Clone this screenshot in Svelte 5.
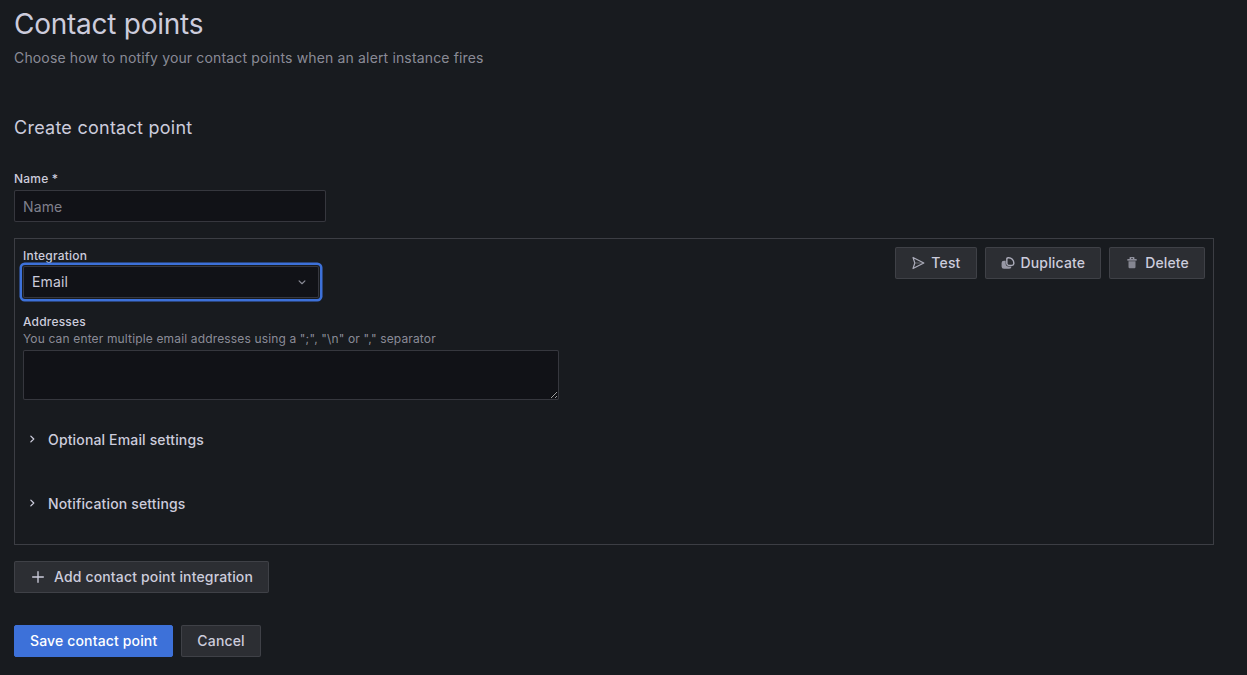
<script>
  const actions = [
    { label: 'Test', icon: 'send' },
    { label: 'Duplicate', icon: 'copy' },
    { label: 'Delete', icon: 'trash' }
  ];
  const sections = ['Optional Email settings', 'Notification settings'];
</script>

<div class="page">
  <header class="page-header">
    <h1>Contact points</h1>
    <p>Choose how to notify your contact points when an alert instance fires</p>
  </header>

  <h2>Create contact point</h2>

  <div class="field name-field">
    <label for="name">Name *</label>
    <input id="name" type="text" placeholder="Name" />
  </div>

  <section class="integration">
    <div class="actions">
      {#each actions as action}
        <button class="btn">
          <svg class="icon" viewBox="0 0 24 24" width="14" height="14">
            {#if action.icon === 'send'}
              <path d="M3.500 2.500 22 12 3.500 21.500 6.500 12Z" fill="none" stroke="currentColor" stroke-width="2" stroke-linejoin="round" />
              <path d="M7 12H20" fill="none" stroke="currentColor" stroke-width="1.200" opacity="0.6" />
            {:else if action.icon === 'copy'}
              <path d="M1 12a4 4 0 0 1 4-4h3v5a5 5 0 0 0 5 5h5a4 4 0 0 1-4 4H5a4 4 0 0 1-4-4Z" fill="currentColor" opacity="0.85" />
              <path d="M10 5a2 2 0 0 1 2-2h1a9 9 0 0 1 9 9v1a3 3 0 0 1-3 3h-6a3 3 0 0 1-3-3Z" fill="none" stroke="currentColor" stroke-width="2.400" stroke-linejoin="round" />
            {:else}
              <path d="M9 5V3h6v2M4 6.500h16" fill="none" stroke="currentColor" stroke-width="2" />
              <path d="M6 9h12v10a2 2 0 0 1-2 2H8a2 2 0 0 1-2-2Z" fill="currentColor" opacity="0.7" />
            {/if}
          </svg>
          {action.label}
        </button>
      {/each}
    </div>

    <div class="field integration-field">
      <span class="label">Integration</span>
      <div class="select">
        <span>Email</span>
        <svg viewBox="0 0 24 24" width="14" height="14">
          <path d="M7 10l5 5 5-5" fill="none" stroke="currentColor" stroke-width="2" stroke-linecap="round" stroke-linejoin="round" />
        </svg>
      </div>
    </div>

    <div class="field addresses-field">
      <label for="addresses">Addresses</label>
      <span class="hint">You can enter multiple email addresses using a ";", "\n" or "," separator</span>
      <textarea id="addresses"></textarea>
    </div>

    {#each sections as section}
      <div class="collapse">
        <svg viewBox="0 0 24 24" width="14" height="14">
          <path d="M10 7l5 5-5 5" fill="none" stroke="currentColor" stroke-width="2.200" stroke-linecap="round" stroke-linejoin="round" />
        </svg>
        <span>{section}</span>
      </div>
    {/each}
  </section>

  <button class="btn add">
    <svg viewBox="0 0 24 24" width="16" height="16">
      <path d="M12 4v16M4 12h16" fill="none" stroke="currentColor" stroke-width="2" stroke-linecap="round" />
    </svg>
    Add contact point integration
  </button>

  <div class="footer">
    <button class="btn primary">Save contact point</button>
    <button class="btn">Cancel</button>
  </div>
</div>

<style>
  :global(body) {
    background: #181b1f;
  }

  .page {
    box-sizing: border-box;
    height: 675px;
    padding: 6px 33px 0 14px;
    background: #181b1f;
    color: #ccccdc;
    font-family: Inter, sans-serif;
    font-size: 14px;
    letter-spacing: 0.15px;
    overflow: hidden;
  }

  h1 {
    margin: 0;
    font-size: 28px;
    font-weight: 400;
    line-height: 36px;
    letter-spacing: -0.25px;
  }

  .page-header p {
    margin: 6px 0 0;
    line-height: 20px;
    color: rgba(204, 204, 220, 0.65);
  }

  h2 {
    margin: 48px 0 0;
    font-size: 18px;
    font-weight: 400;
    line-height: 24px;
    letter-spacing: 0.25px;
  }

  .field {
    display: flex;
    flex-direction: column;
  }

  label,
  .label {
    font-size: 12px;
    font-weight: 500;
    line-height: 16px;
    letter-spacing: 0.2px;
  }

  .name-field {
    margin-top: 31px;
    width: 312px;
    gap: 3px;
  }

  input,
  textarea {
    box-sizing: border-box;
    width: 100%;
    background: #111217;
    border: 1px solid rgba(204, 204, 220, 0.2);
    border-radius: 2px;
    color: #ccccdc;
    font: inherit;
    letter-spacing: inherit;
    outline: none;
  }

  input {
    height: 32px;
    padding: 0 8px;
  }

  input::placeholder {
    color: rgba(204, 204, 220, 0.6);
  }

  .integration {
    position: relative;
    box-sizing: border-box;
    height: 307px;
    margin-top: 16px;
    padding: 9px 8px 8px;
    border: 1px solid rgba(204, 204, 220, 0.2);
  }

  .actions {
    position: absolute;
    top: 8px;
    right: 8px;
    display: flex;
    gap: 8px;
  }

  .btn {
    display: inline-flex;
    align-items: center;
    box-sizing: border-box;
    height: 32px;
    padding: 0 15px;
    gap: 6px;
    background: #2c2e33;
    border: 1px solid rgba(204, 204, 220, 0.12);
    border-radius: 2px;
    color: #ccccdc;
    font: inherit;
    font-weight: 500;
    letter-spacing: inherit;
    line-height: 1;
  }

  .icon {
    color: rgba(204, 204, 220, 0.8);
  }

  .integration-field {
    width: 296px;
    gap: 2px;
  }

  .select {
    display: flex;
    align-items: center;
    justify-content: space-between;
    box-sizing: border-box;
    height: 32px;
    padding: 0 9px 2px 8px;
    background: #111217;
    border: 1px solid rgba(204, 204, 220, 0.2);
    border-radius: 2px;
    box-shadow: 0 0 0 1px #181b1f, 0 0 0 3.500px #3d71d9;
  }

  .select svg {
    color: rgba(204, 204, 220, 0.65);
    margin-top: 2px;
  }

  .addresses-field {
    width: 536px;
    margin-top: 16px;
  }

  .hint {
    margin-top: 1px;
    font-size: 12px;
    line-height: 16px;
    letter-spacing: 0.15px;
    color: rgba(204, 204, 220, 0.65);
  }

  textarea {
    display: block;
    height: 50px;
    margin-top: 3px;
    padding: 4px 8px;
  }

  .collapse {
    display: flex;
    align-items: center;
    gap: 9px;
    height: 24px;
    margin-top: 27px;
    padding-left: 2px;
    font-weight: 500;
  }

  .collapse + .collapse {
    margin-top: 40px;
  }

  .add {
    margin-top: 16px;
    gap: 8px;
  }

  .footer {
    display: flex;
    gap: 8px;
    margin-top: 32px;
  }

  .primary {
    background: #3d71d9;
    border-color: #3d71d9;
    color: #fff;
  }
</style>
